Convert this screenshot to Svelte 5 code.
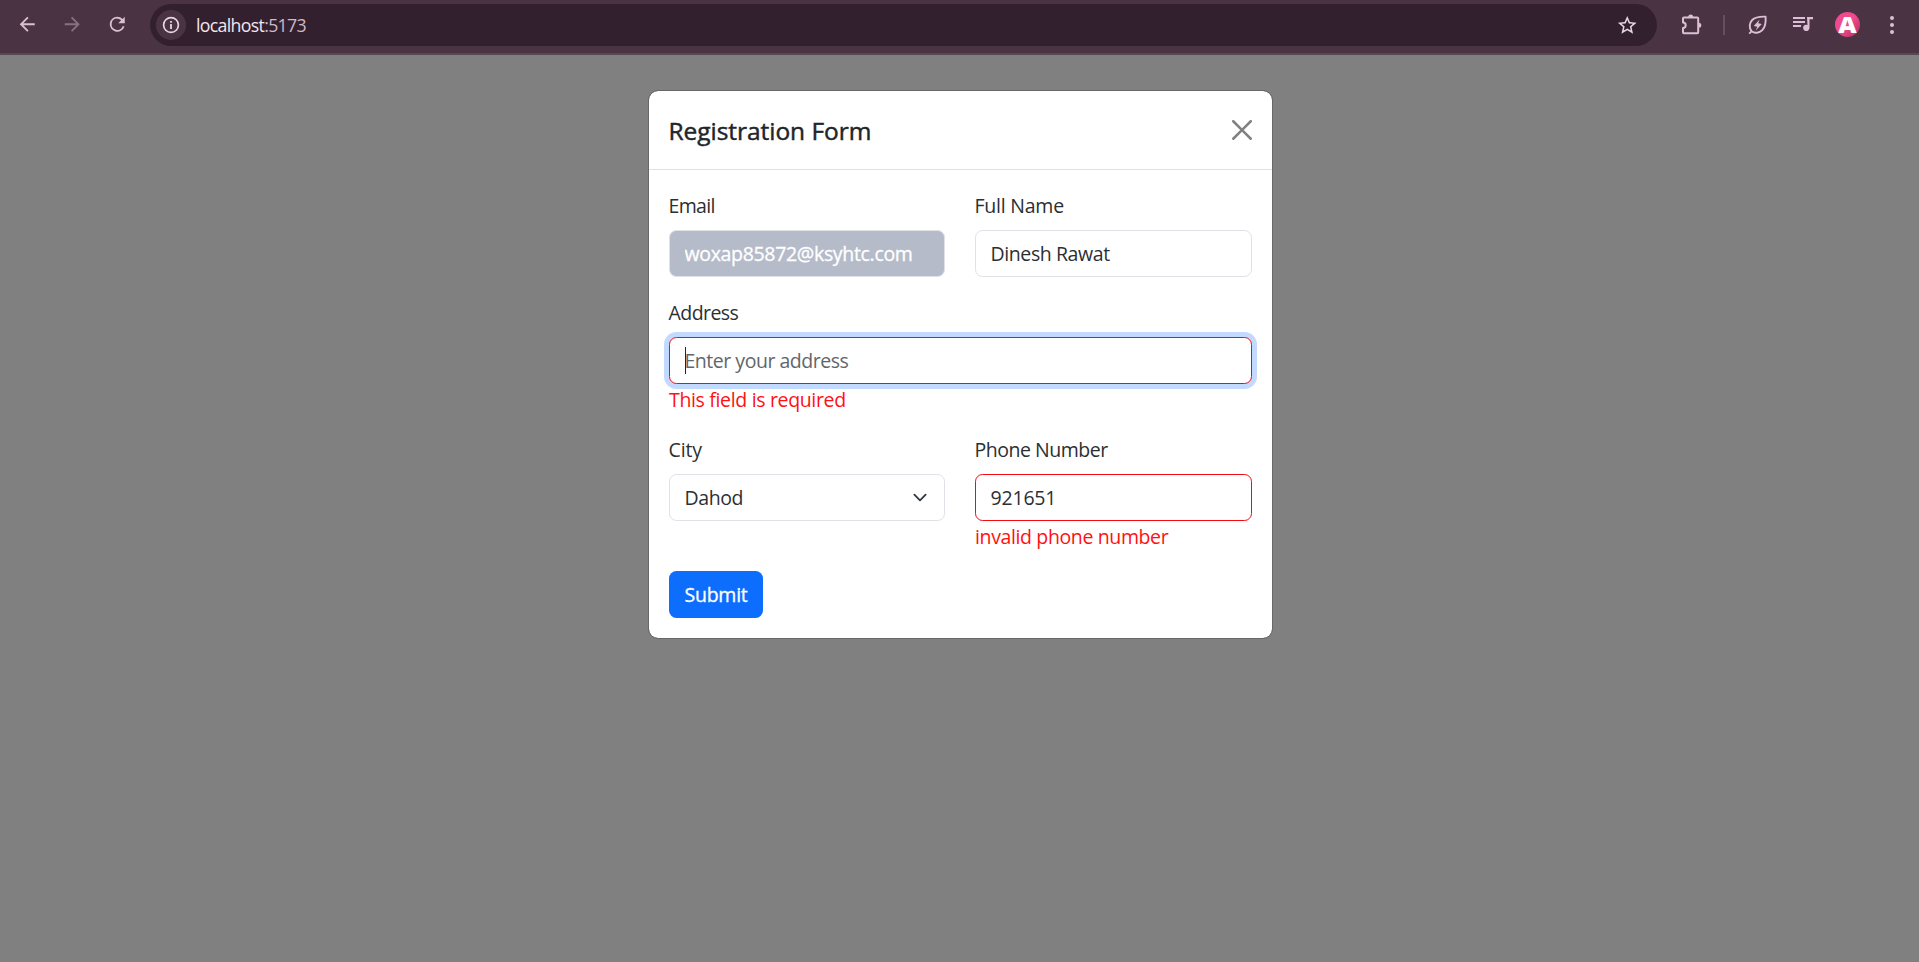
<script>
  // Sets letter-spacing so that a line of text spans the given width in pixels.
  function fit(node, width) {
    const text = node.value || node.placeholder || node.textContent.trim();
    const cs = getComputedStyle(node);
    const ctx = document.createElement('canvas').getContext('2d');
    ctx.font = `${cs.fontWeight} ${cs.fontSize} ${cs.fontFamily}`;
    const m = ctx.measureText(text);
    const ink = m.actualBoundingBoxRight + m.actualBoundingBoxLeft;
    node.style.letterSpacing = `${(width - ink) / (text.length - 1)}px`;
  }
</script>

<div class="window">
  <header class="toolbar">
    <nav class="nav">
      <svg class="ic" viewBox="0 0 24 24"><path d="M20 11H7.83l5.59-5.59L12 4l-8 8 8 8 1.41-1.41L7.83 13H20z" /></svg>
      <svg class="ic dim" viewBox="0 0 24 24"><path d="M4 11h12.17l-5.59-5.59L12 4l8 8-8 8-1.41-1.41L16.17 13H4z" /></svg>
      <svg class="ic" viewBox="0 0 24 24"><path d="M17.65 6.35A7.96 7.96 0 0 0 12 4a8 8 0 1 0 7.73 10h-2.08A6 6 0 1 1 12 6c1.66 0 3.14.69 4.22 1.78L13 11h7V4z" /></svg>
    </nav>
    <div class="omnibox">
      <span class="site">
        <svg viewBox="0 0 18 18"><circle cx="9" cy="9" r="7.4" fill="none" stroke="#e6d7e1" stroke-width="1.7" /><path d="M8.1 8.1h1.8v4.8H8.1zM8.1 5h1.8v1.8H8.1z" fill="#e6d7e1" /></svg>
      </span>
      <span class="url"><span use:fit={109.5}>localhost<i>:5173</i></span></span>
      <svg class="star" viewBox="0 0 24 24"><path d="M22 9.24l-7.19-.62L12 2 9.19 8.63 2 9.24l5.46 4.73L5.82 21 12 17.27 18.18 21l-1.63-7.03zM12 15.4l-3.76 2.27 1-4.28-3.32-2.88 4.38-.38L12 6.1l1.71 4.04 4.38.38-3.32 2.88 1 4.28z" /></svg>
    </div>
    <div class="tools">
      <svg class="puzzle" viewBox="0 0 22 22" fill="none" stroke="#dcbfd5" stroke-width="2" stroke-linejoin="round"><path d="M3 3.500h13.200q1 0 1 1v13.700q0 1-1 1H3q-1 0-1-1v-4.200a2.700 2.700 0 0 0 0-5.400V4.500q0-1 1-1z" /><path d="M7.200 3a2.500 2.500 0 0 1 5 0zM17.800 8.800a2.500 2.500 0 0 1 0 5z" fill="#dcbfd5" stroke="none" /></svg>
      <span class="sep"></span>
      <svg class="leaf" viewBox="0 0 20 20" fill="none" stroke="#dcbfd5" stroke-width="1.9" stroke-linejoin="round"><path d="M3.600 16.300C.8 12.900 1.300 8 4.200 5 7 2.200 12 1.500 17.600 1.700c.4 5.800-.3 10.500-3.300 13.500-3 2.900-7.600 3.400-10.700 1.100zM3.800 16.100 1.200 18.700" /><path d="M11.600 4.600 5.700 11.100l3.500.7-1.400 3.700 6-6.400-3.600-.8z" fill="#dcbfd5" stroke="none" /></svg>
      <svg class="music" viewBox="0 0 20 17"><path d="M0 1h12v2H0zM0 5h12v2H0zM0 9h8v2H0zM14 1h6v2.200h-3.500v8.600a3.200 3.200 0 1 1-2-2.900z" /></svg>
      <span class="avatar"><b>A</b></span>
      <svg class="dots" viewBox="0 0 6 20"><circle cx="3" cy="3" r="2" /><circle cx="3" cy="10" r="2" /><circle cx="3" cy="17" r="2" /></svg>
    </div>
  </header>

  <main class="backdrop">
    <section class="modal">
      <div class="head">
        <h5><span use:fit={199.2}>Registration Form</span></h5>
        <svg class="close" viewBox="0 0 16 16"><path d="M.293.293a1 1 0 0 1 1.414 0L8 6.586 14.293.293a1 1 0 1 1 1.414 1.414L9.414 8l6.293 6.293a1 1 0 0 1-1.414 1.414L8 9.414l-6.293 6.293a1 1 0 0 1-1.414-1.414L6.586 8 .293 1.707a1 1 0 0 1 0-1.414z" /></svg>
      </div>
      <form class="body">
        <div class="row">
          <div class="field">
            <label for="email" use:fit={45}>Email</label>
            <input id="email" class="locked" value="woxap85872@ksyhtc.com" readonly use:fit={227.3} />
          </div>
          <div class="field">
            <label for="name" use:fit={87.7}>Full Name</label>
            <input id="name" value="Dinesh Rawat" use:fit={118.7} />
          </div>
        </div>
        <div class="field address">
          <label for="address" use:fit={70}>Address</label>
          <div class="control">
            <input id="address" class="invalid focus" placeholder="Enter your address" use:fit={163} />
            <span class="caret"></span>
          </div>
          <p class="error"><span use:fit={176.2}>This field is required</span></p>
        </div>
        <div class="row last">
          <div class="field">
            <label for="city" use:fit={32.7}>City</label>
            <div id="city" class="select">
              <span use:fit={57}>Dahod</span>
              <svg viewBox="0 0 16 16"><path d="m2 5 6 6 6-6" /></svg>
            </div>
          </div>
          <div class="field">
            <label for="phone" use:fit={132.7}>Phone Number</label>
            <input id="phone" class="invalid" value="921651" use:fit={61.800} />
            <p class="error"><span use:fit={192.7}>invalid phone number</span></p>
          </div>
        </div>
        <button type="button"><span use:fit={62.3}>Submit</span></button>
      </form>
    </section>
  </main>
</div>

<style>
  :global(body) { margin: 0; }
  .window, .window * { box-sizing: border-box; }
  .window {
    width: 100%;
    height: 962px;
    display: flex;
    flex-direction: column;
    overflow: hidden;
    font-family: 'Open Sans', 'Noto Sans', sans-serif;
    font-size: 19.5px;
    line-height: 30px;
    color: #2b2f33;
  }
  svg { display: block; flex: none; }

  .toolbar {
    height: 55px;
    flex: none;
    display: flex;
    align-items: flex-start;
    background: #4a3444;
    border-bottom: 2px solid #554a52;
  }
  .nav { display: flex; gap: 22.500px; padding: 13px 0 0 16.300px; width: 150px; }
  .ic { width: 22.500px; height: 22.500px; fill: #dcbfd5; }
  .dim { fill: #8a7084; }
  .omnibox {
    width: 1507px;
    height: 42px;
    margin-top: 4px;
    padding: 0 18.700px 0 6px;
    border-radius: 21px;
    background: #33202e;
    display: flex;
    align-items: center;
  }
  .site {
    width: 30px;
    height: 30px;
    border-radius: 50%;
    background: #4a3444;
    display: grid;
    place-items: center;
  }
  .site svg { width: 18px; height: 18px; }
  .url { flex: 1; padding: 0 0 0 10px; font-size: 17.700px; line-height: 24px; color: #f1e6ee; }
  .url i { font-style: normal; color: #cdb9c7; }
  .star { width: 22.500px; height: 22.500px; fill: #e6d7e1; }
  .tools { flex: 1; height: 49px; display: flex; align-items: center; }
  .puzzle { width: 22px; height: 22px; margin-left: 24px; }
  .sep { width: 2px; height: 20px; margin-left: 20px; background: #65505f; }
  .leaf { width: 20px; height: 20px; margin-left: 23px; }
  .music { width: 20px; height: 17px; margin-left: 25px; fill: #dcbfd5; }
  .avatar {
    width: 25px;
    height: 25px;
    margin-left: 22px;
    border-radius: 50%;
    background: linear-gradient(135deg, #ee4a8d 50%, #cc3a70 78%);
    color: #fff;
    font: 800 23px/25px 'Open Sans', sans-serif;
    text-align: center;
  }
  .avatar b { display: block; font-weight: inherit; transform: scaleX(1.1); }
  .dots { width: 6px; height: 20px; margin-left: 29px; fill: #dcbfd5; }

  .backdrop {
    flex: 1;
    display: flex;
    justify-content: center;
    align-items: flex-start;
    padding: 35px 0 0 2px;
    background: #808080;
  }
  .modal {
    width: 625px;
    height: 549px;
    border: 1px solid #686868;
    border-radius: 10px;
    background: #fff;
    background-clip: padding-box;
  }
  .head {
    height: 79px;
    padding: 0 20px;
    border-bottom: 1px solid #dee2e6;
    display: flex;
    justify-content: space-between;
    align-items: center;
  }
  h5 {
    margin: 0 0 0 -0.500px;
    padding-top: 2px;
    font-size: 24.500px;
    font-weight: 500;
    line-height: 36px;
    color: #212529;
    -webkit-text-stroke: 0.45px #212529;
  }
  .close { width: 20px; height: 20px; fill: #808080; }
  .body { padding: 20px; }
  .row { display: grid; grid-template-columns: 276px 277px; gap: 30px; height: 107px; }
  .field { display: flex; flex-direction: column; min-width: 0; }
  .address { height: 137px; }
  .row.last { height: 137px; }
  label { height: 30px; margin: 0 0 10px -0.500px; padding-top: 1px; align-self: flex-start; white-space: nowrap; }
  input, .select {
    display: block;
    width: 100%;
    height: 47px;
    flex: none;
    padding: 0 14.500px;
    border: 1px solid #dee2e6;
    border-radius: 7.500px;
    background: #fff;
    color: #2b2f33;
    font: inherit;
    outline: none;
  }
  input::placeholder { color: #62666b; opacity: 1; }
  .locked { background: #b5bbc9; color: #fff; -webkit-text-stroke: 0.3px #fff; }
  .invalid { border-color: #f50a10; }
  .focus { box-shadow: 0 0 0 5px #c2daff; }
  .control { position: relative; }
  .caret { position: absolute; left: 16px; top: 10px; width: 1px; height: 27px; background: #212529; }
  .error { margin: 0; height: 30px; padding-top: 1px; color: #ff1014; white-space: nowrap; }
  .select { display: flex; align-items: center; justify-content: space-between; }
  .select svg { width: 20px; height: 15px; }
  .select path { fill: none; stroke: #343a40; stroke-width: 2; stroke-linecap: round; stroke-linejoin: round; }
  button {
    display: block;
    width: 94px;
    height: 47px;
    padding: 0;
    border: 0;
    border-radius: 7.500px;
    background: #0d6efd;
    color: #fff;
    font: inherit;
    -webkit-text-stroke: 0.3px #fff;
  }
</style>
